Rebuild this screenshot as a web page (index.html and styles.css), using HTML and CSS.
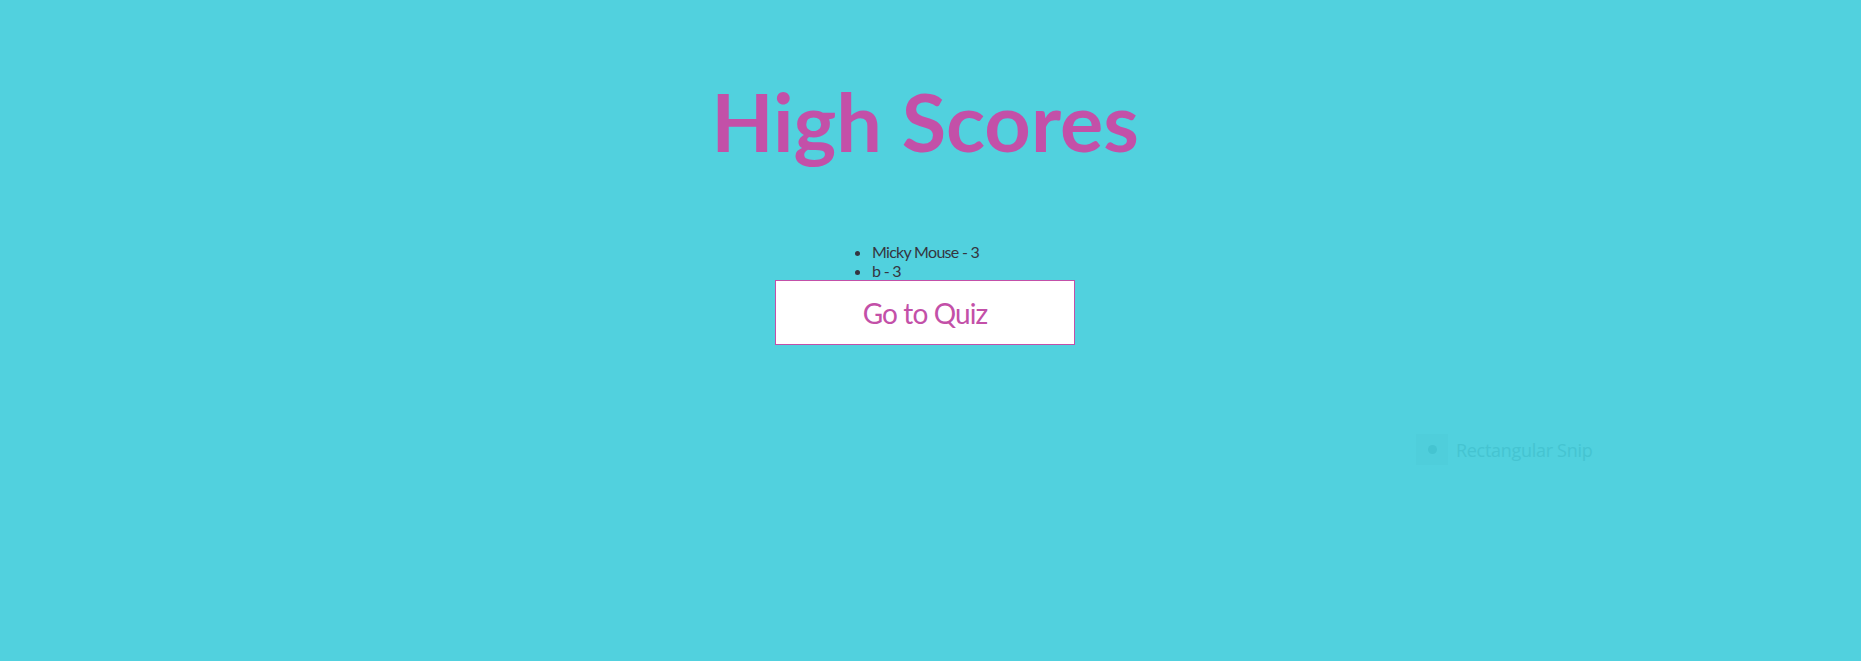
FILE: index.html
```html
<!DOCTYPE html>
<html lang="en">
<head>
<meta charset="utf-8">
<title>High Scores</title>
<link rel="stylesheet" href="styles.css">
</head>
<body>
<main class="page">
  <h1 class="title">High Scores</h1>
  <ul class="scores">
    <li>Micky Mouse - 3</li>
    <li>b - 3</li>
  </ul>
  <a class="btn" href="#">Go to Quiz</a>
</main>
<div class="snip">
  <span class="snip-icon"><span class="snip-dot"></span></span>
  <span class="snip-label">Rectangular Snip</span>
</div>
</body>
</html>
```
FILE: styles.css
```css
html, body {
  margin: 0;
  padding: 0;
  height: 100%;
}
body {
  background: #51d1de;
  font-family: Lato, "Open Sans", sans-serif;
  color: #333;
  overflow: hidden;
}
.page {
  display: flex;
  flex-direction: column;
  align-items: center;
  padding-right: 11px;
}
.title {
  margin: 72px 0 73px;
  font-size: 81px;
  font-weight: 700;
  line-height: 97px;
  color: #c350a8;
}
.scores {
  width: 186px;
  box-sizing: border-box;
  margin: 0;
  padding-left: 40px;
  font-size: 16px;
  letter-spacing: -0.7px;
  color: #353540;
  line-height: 19px;
}
.btn {
  display: flex;
  align-items: center;
  justify-content: center;
  width: 300px;
  height: 65px;
  box-sizing: border-box;
  background: #fff;
  border: 1px solid #c350a8;
  color: #c350a8;
  font-size: 28px;
  letter-spacing: -0.9px;
  text-decoration: none;
}
.snip {
  position: absolute;
  left: 1416px;
  top: 434px;
  display: flex;
  align-items: center;
  gap: 8px;
  opacity: 0.3;
}
.snip-icon {
  width: 32px;
  height: 31px;
  background: #4cc9d6;
  display: flex;
  align-items: center;
  justify-content: center;
}
.snip-dot {
  width: 9px;
  height: 9px;
  border-radius: 50%;
  background: #2aa7b4;
}
.snip-label {
  font-family: "Open Sans", sans-serif;
  font-size: 18px;
  letter-spacing: -0.3px;
  color: #2aa7b4;
}
```
